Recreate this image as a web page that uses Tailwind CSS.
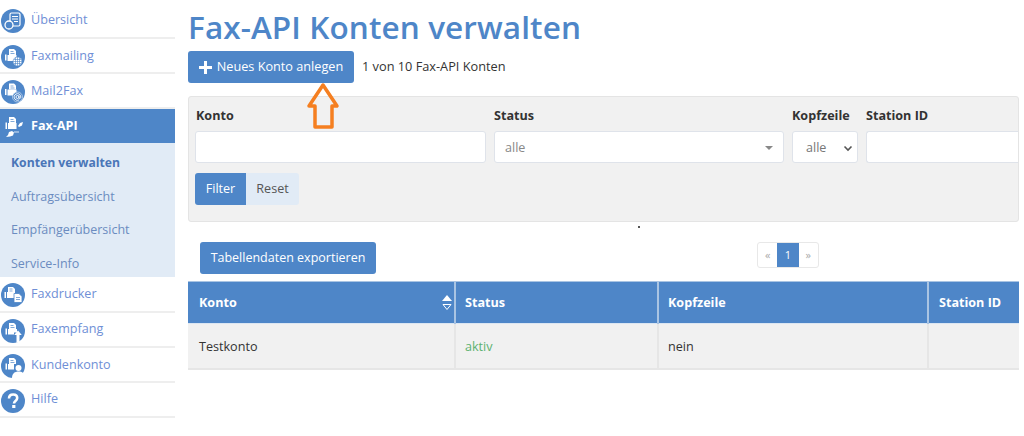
<!DOCTYPE html>
<html lang="de">
<head>
  <meta charset="UTF-8">
  <title>Fax-API Konten verwalten</title>
  <script src="https://cdn.jsdelivr.net/npm/@tailwindcss/browser@4"></script>
</head>
<body class="bg-white text-[#333] font-['Open_Sans',sans-serif] text-[12.600px] overflow-hidden">
<div class="relative flex h-[436px] w-[1024px] overflow-hidden">

  <!-- Seitenmenue -->
  <nav class="w-[175px] shrink-0 pt-[3px] text-[12.600px] text-[#6f8fd6]">
    <a class="flex h-[36px] items-center gap-[6px] border-b-2 border-[#eee] pl-[1px]">
      <svg class="mt-[2px] size-6" viewBox="0 0 24 24"><circle cx="12" cy="12" r="12" fill="#4e86c8"/><rect x="9" y="4" width="10" height="13" rx="1.500" fill="none" stroke="#fff" stroke-width="1.200"/><path d="M11 7.500h6M11 10h6M13 12.500h4" stroke="#fff"/><circle cx="8" cy="16" r="4" fill="#4e86c8" stroke="#fff" stroke-width="1.300"/></svg>
      Übersicht
    </a>
    <a class="flex h-[35px] items-center gap-[6px] border-b-2 border-[#eee] pl-[1px] pt-[1px]">
      <svg class="mt-[1px] size-6" viewBox="0 0 24 24"><circle cx="12" cy="12" r="12" fill="#4e86c8"/><path d="M8 4h5l2 2v4H8z" fill="#fff"/><path d="M9.500 6.500h3M9.500 8.500h4" stroke="#4e86c8" stroke-width=".7"/><path d="M4 9.500h1.500v6H4zM6.500 10h9v6h-9z" fill="#fff"/><circle cx="16.500" cy="16.500" r="4.500" fill="#fff" stroke="#4e86c8" stroke-width=".6"/><path d="M12 16.500h9M16.500 12v9M13 14.500h7M13 18.500h7M14.500 12.500v8M18.500 12.500v8" stroke="#4e86c8" stroke-width=".6"/></svg>
      Faxmailing
    </a>
    <a class="flex h-[35px] items-center gap-[6px] border-b-2 border-[#eee] pl-[1px] pt-[1px]">
      <svg class="mt-[1px] size-6" viewBox="0 0 24 24"><circle cx="12" cy="12" r="12" fill="#4e86c8"/><path d="M8 3.500h5l2 2v4H8z" fill="#fff"/><path d="M9.500 6h3M9.500 8h4" stroke="#4e86c8" stroke-width=".7"/><path d="M4 9h1.500v6H4zM6.500 9.500h9v6h-9z" fill="#fff"/><circle cx="16.500" cy="17" r="5" fill="#4e86c8" stroke="#fff" stroke-width=".5"/><circle cx="16.500" cy="17" r="1.500" fill="none" stroke="#fff" stroke-width=".9"/><path d="M18 15.500v2.300c0 1.100 1.800 1 1.800-.8 0-2-1.500-3.300-3.300-3.300a3.300 3.300 0 1 0 1.700 6.100" fill="none" stroke="#fff" stroke-width=".9"/></svg>
      Mail2Fax
    </a>
    <a class="flex h-[34px] items-center gap-[6px] bg-[#4e86c8] pl-[1px] font-bold text-white">
      <svg class="size-6" viewBox="0 0 24 24"><path d="M8 3h5l2 2v4H8z" fill="#fff"/><path d="M9.500 5.500h3M9.500 7.500h4" stroke="#4e86c8" stroke-width=".7"/><path d="M4.500 8.500H6v6.500H4.500zM7 9h8.500v6H7z" fill="#fff"/><path d="M17 12l2-3 3-1-1 3.500-3 1.500z" fill="#fff"/><path d="M5 23l2-2 1-3 3-1 2 1.500-1 3-3 1z" fill="#fff"/><path d="M13 18h5" stroke="#fff" stroke-width=".8"/></svg>
      Fax-API
    </a>
    <div class="flex h-[134px] flex-col bg-[#e1ebf6] pl-[11px] text-[12.500px] text-[#6b8cc0]">
      <a class="flex h-[38px] items-center pt-[2px] text-[12.200px] font-bold text-[#4a76b8]">Konten verwalten</a>
      <a class="flex h-[33px] items-center">Auftragsübersicht</a>
      <a class="flex h-[33px] items-center">Empfängerübersicht</a>
      <a class="flex h-[30px] items-center pt-[4px]">Service-Info</a>
    </div>
    <a class="flex h-[36px] items-center gap-[6px] border-b-2 border-[#eee] pl-[1px]">
      <svg class="mt-[2px] size-6" viewBox="0 0 24 24"><circle cx="12" cy="12" r="12" fill="#4e86c8"/><path d="M7 4h5l2 2v3H7z" fill="#fff"/><path d="M8.500 6h3M8.500 8h3" stroke="#4e86c8" stroke-width=".7"/><path d="M3.500 9H5v6H3.500zM6 9h8v6H6z" fill="#fff"/><path d="M13 10.500h5l3 3v6h-8z" fill="#fff" stroke="#4e86c8" stroke-width=".8"/><path d="M15 14.500h4M15 16.500h4" stroke="#4e86c8" stroke-width=".7"/></svg>
      Faxdrucker
    </a>
    <a class="flex h-[35px] items-center gap-[6px] border-b-2 border-[#eee] pl-[1px]">
      <svg class="mt-[2px] size-6" viewBox="0 0 24 24"><circle cx="12" cy="12" r="12" fill="#4e86c8"/><path d="M8 4h5l2 2v4H8z" fill="#fff"/><path d="M9.500 6.500h3M9.500 8.500h4" stroke="#4e86c8" stroke-width=".7"/><path d="M4.500 9.500H6v6H4.500zM7 10h9v3.500h-3v2H7z" fill="#fff"/><path d="M15.500 24v-8h-2.300l3.800-4.500 3.800 4.500h-2.300v7z" fill="#fff"/></svg>
      Faxempfang
    </a>
    <a class="flex h-[35px] items-center gap-[6px] border-b-2 border-[#eee] pl-[1px] pt-[1px]">
      <svg class="mt-[1px] size-6" viewBox="0 0 24 24"><circle cx="12" cy="12" r="12" fill="#4e86c8"/><path d="M8 4h5l2 2v4H8z" fill="#fff"/><path d="M9.500 6.500h3M9.500 8.500h4" stroke="#4e86c8" stroke-width=".7"/><path d="M4.500 9.500H6v6H4.500zM7 10h6v5.500H7z" fill="#fff"/><circle cx="17.500" cy="14" r="3" fill="#fff"/><path d="M11 24c0-4.500 3-6.500 6.500-6.500S24 19 24 24z" fill="#fff"/></svg>
      Kundenkonto
    </a>
    <a class="flex h-[35px] items-center gap-[6px] border-b-2 border-[#eee] pl-[1px]">
      <svg class="mt-[2px] size-6" viewBox="0 0 24 24"><circle cx="12" cy="12" r="12" fill="#4e86c8"/><path d="M8 9.500C8 7 9.800 5.500 12.200 5.500c2.300 0 4 1.400 4 3.500 0 3-3.200 3-3.200 5.500" fill="none" stroke="#fff" stroke-width="2.600"/><rect x="11.200" y="16" width="3.200" height="3" fill="#fff"/></svg>
      Hilfe
    </a>
  </nav>

  <!-- Inhalt -->
  <main class="ml-[13px] w-[831px] shrink-0">
    <h1 class="mt-[8px] h-[43px] text-[31.500px] leading-[38px] font-semibold tracking-[0.1px] text-[#4e86c8]">Fax-API Konten verwalten</h1>

    <div class="flex items-center gap-2">
      <button class="flex h-[32px] w-[166px] items-center justify-center gap-[5px] rounded-[3px] bg-[#4e86c8] text-[12.700px] text-white">
        <svg class="size-[13px]" viewBox="0 0 13 13"><path d="M5 0h3v5h5v3H8v5H5V8H0V5h5z" fill="#fff"/></svg>
        Neues Konto anlegen
      </button>
      <span class="text-[12.750px]">1 von 10 Fax-API Konten</span>
    </div>

    <form class="mt-[13px] h-[126px] rounded-[3px] border border-[#e4e4e4] bg-[#f1f1f1] pl-[6px] pt-[10px]">
      <div class="flex gap-[8px]">
        <div class="w-[291px]">
          <label class="block h-[24px] pl-[1px] leading-[18px] font-bold">Konto</label>
          <input class="h-[32px] w-full rounded-[3px] border border-[#dfe3ea] bg-white">
        </div>
        <div class="w-[290px]">
          <label class="block h-[24px] leading-[18px] font-bold">Status</label>
          <div class="flex h-[32px] items-center justify-between rounded-[3px] border border-[#dfe3ea] bg-white px-[10px] pt-[2px] text-[#888]">alle
            <span class="h-0 w-0 border-x-[4px] border-t-[4px] border-x-transparent border-t-[#888]"></span>
          </div>
        </div>
        <div class="w-[66px]">
          <label class="block h-[24px] leading-[18px] font-bold">Kopfzeile</label>
          <div class="flex h-[32px] items-center justify-between rounded-[3px] border border-[#dfe3ea] bg-white pl-[13px] pr-[4px] pt-[2px] text-[#777]">alle
            <svg class="size-[10px]" viewBox="0 0 10 10"><path d="M1.500 3.500 5 7l3.500-3.500" fill="none" stroke="#555" stroke-width="1.600"/></svg>
          </div>
        </div>
        <div class="flex-1">
          <label class="block h-[24px] leading-[18px] font-bold">Station ID</label>
          <div class="h-[32px] rounded-l-[3px] border-y border-l border-[#dfe3ea] bg-white"></div>
        </div>
      </div>
      <div class="mt-[10px] flex">
        <button type="button" class="h-[32px] w-[51px] rounded-l-[3px] bg-[#4e86c8] text-white">Filter</button>
        <button type="button" class="h-[32px] w-[53px] rounded-r-[3px] bg-[#e1ebf6] text-[#555]">Reset</button>
      </div>
    </form>

    <div class="mt-[20px] flex h-[39px] items-start pl-[12px]">
      <button class="h-[32px] w-[176px] rounded-[3px] bg-[#4e86c8] text-[12.500px] text-white">Tabellendaten exportieren</button>
      <div class="ml-[381px] flex h-[26px] w-[62px] overflow-hidden rounded-[3px] border border-[#e8e8e8] text-[11px]">
        <span class="flex w-[20px] items-center justify-center text-[#aaa]">«</span>
        <span class="flex w-[22px] items-center justify-center bg-[#4e86c8] text-white">1</span>
        <span class="flex w-[20px] items-center justify-center text-[#aaa]">»</span>
      </div>
    </div>

    <table class="w-[831px] table-fixed border-collapse">
      <thead>
        <tr class="h-[42px] border-y border-t-[#a9c4e3] border-b-[#dbe6f2] bg-[#4e86c8] text-left font-bold text-white">
          <th class="relative w-[267px] border-r-2 border-[#a9c4e3] pl-[11px] pt-[1px]">Konto
            <svg class="absolute top-[13px] right-[1px] h-[16px] w-[12px]" viewBox="0 0 12 16"><path d="M6 0l5 6H1z" fill="#fff"/><path d="M2 9.500h8L6 14.500z" fill="none" stroke="#fff"/></svg>
          </th>
          <th class="w-[203px] border-r-2 border-[#a9c4e3] pl-[9px] pt-[1px]">Status</th>
          <th class="w-[270px] border-r-2 border-[#a9c4e3] pl-[9px] pt-[1px]">Kopfzeile</th>
          <th class="pl-[10px] pt-[1px]">Station ID</th>
        </tr>
      </thead>
      <tbody>
        <tr class="h-[45px] border-b-2 border-[#e6e6e6] bg-[#f1f1f1]">
          <td class="border-r-2 border-[#e6e6e6] pl-[11px] pt-[3px]">Testkonto</td>
          <td class="border-r-2 border-[#e6e6e6] pl-[9px] pt-[3px] text-[#5cb270]">aktiv</td>
          <td class="border-r-2 border-[#e6e6e6] pl-[9px] pt-[3px]">nein</td>
          <td></td>
        </tr>
      </tbody>
    </table>
  </main>

  <!-- Pfeil aus dem Screenshot -->
  <svg class="absolute top-[82px] left-[306px] h-[48px] w-[34px]" viewBox="0 0 34 48"><path d="M17 3 31 24H26V45H9V24H3z" fill="none" stroke="#f57f20" stroke-width="3.500" stroke-linejoin="round"/></svg>
  <span class="absolute top-[226px] left-[638px] size-[2px] bg-[#555]"></span>
</div>
</body>
</html>
